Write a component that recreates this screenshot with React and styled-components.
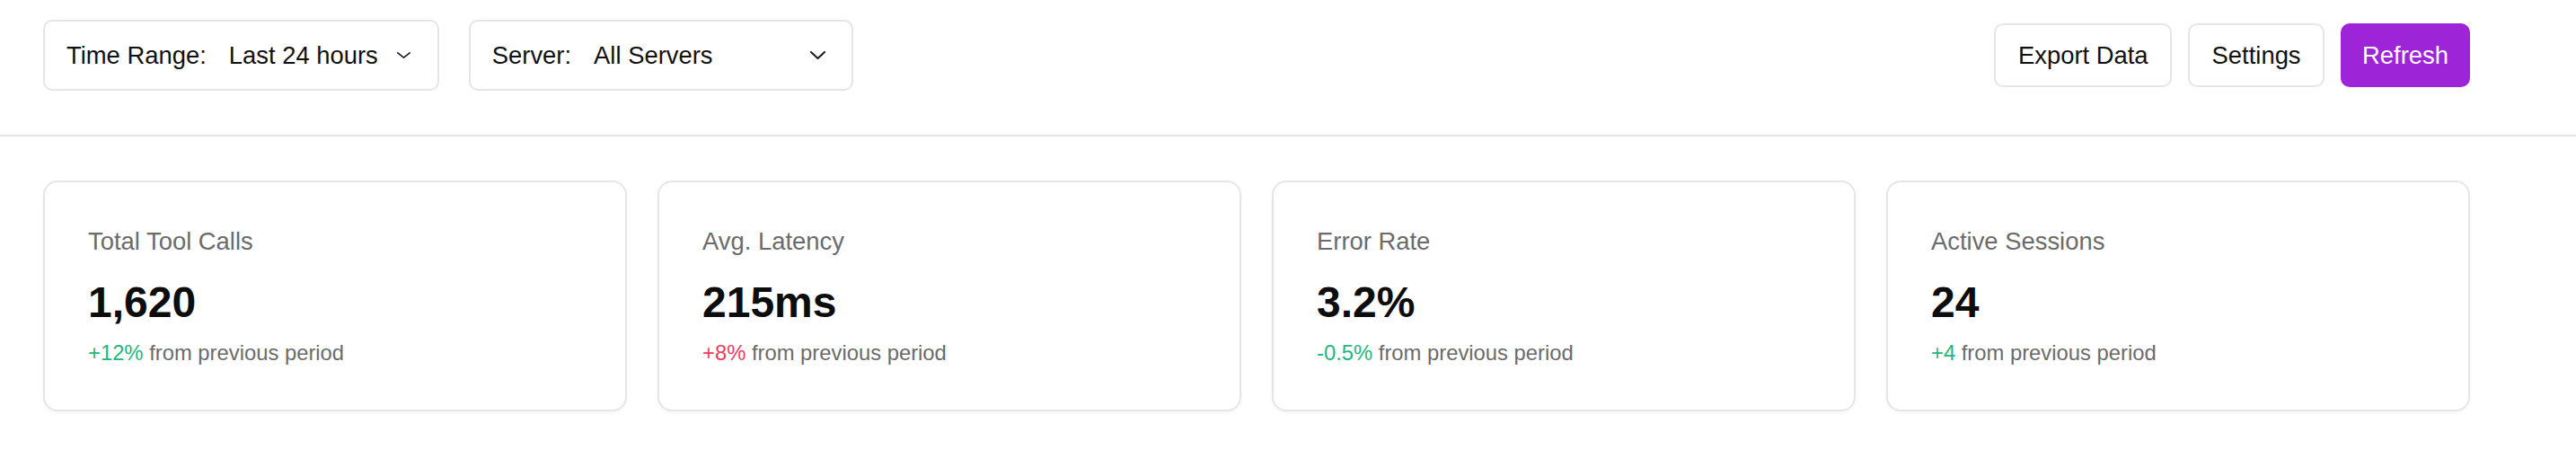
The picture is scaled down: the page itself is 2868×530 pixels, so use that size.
import React from "react";
import styled, { createGlobalStyle } from "styled-components";

const GlobalStyle = createGlobalStyle`
  html, body {
    margin: 0;
    padding: 0;
    background: #ffffff;
  }
  body {
    font-family: "Liberation Sans", Arial, Helvetica, sans-serif;
    color: #111111;
  }
  * { box-sizing: border-box; }
`;

const Page = styled.div`
  width: 100%;
  min-height: 530px;
  background: #ffffff;
`;

const Header = styled.header`
  display: flex;
  align-items: center;
  justify-content: space-between;
  padding: 22px 118px 49px 48px;
  border-bottom: 2px solid #e6e6e6;
`;

const Filters = styled.div`
  display: flex;
  align-items: center;
  gap: 33px;
`;

const FilterBox = styled.div`
  display: flex;
  align-items: center;
  gap: 25px;
  height: 79px;
  padding: 0 ${(p) => p.$padRight}px 0 24px;
  border: 2px solid #e6e6e6;
  border-radius: 10px;
  background: #ffffff;
`;

const FilterLabel = styled.span`
  font-size: 27.4px;
  line-height: 32px;
  color: #111111;
`;

const SelectBox = styled.div`
  display: flex;
  align-items: center;
  justify-content: space-between;
  gap: ${(p) => p.$gap}px;
  width: ${(p) => (p.$width ? `${p.$width}px` : "auto")};
  font-size: 27.4px;
  line-height: 32px;
  color: #111111;
  cursor: pointer;
`;

const Chevron = styled.svg`
  display: block;
  flex: none;
`;

const Actions = styled.div`
  display: flex;
  align-items: center;
  gap: 18px;
`;

const Button = styled.button`
  font-family: "Liberation Sans", Arial, Helvetica, sans-serif;
  font-size: 27.4px;
  line-height: 32px;
  padding: 17.5px ${(p) => (p.$primary ? 22 : 24.5)}px;
  border-radius: 10px;
  border: 2px solid ${(p) => (p.$primary ? "#9e24d8" : "#e6e6e6")};
  background: ${(p) => (p.$primary ? "#9e24d8" : "#ffffff")};
  color: ${(p) => (p.$primary ? "#ffffff" : "#111111")};
  cursor: pointer;
`;

const Cards = styled.section`
  display: grid;
  grid-template-columns: repeat(4, 1fr);
  gap: 34px;
  padding: 49px 118px 0 48px;
`;

const Card = styled.div`
  display: flex;
  flex-direction: column;
  padding: 50px 48px 49px;
  border: 2px solid #e6e6e6;
  border-radius: 16px;
  background: #ffffff;
  box-shadow: 0 2px 4px rgba(0, 0, 0, 0.04);
`;

const CardTitle = styled.div`
  font-size: 27.4px;
  line-height: 32px;
  color: #6b6b6b;
`;

const CardValue = styled.div`
  margin-top: 24px;
  font-size: 48px;
  line-height: 56px;
  font-weight: 700;
  color: #0d0d0d;
`;

const CardDelta = styled.div`
  margin-top: 14px;
  font-size: 23.8px;
  line-height: 28px;
  color: #6b6b6b;
`;

const Change = styled.span`
  color: ${(p) => (p.$bad ? "#f03c5c" : "#1fb67f")};
`;

const ChevronIcon = ({ w, h, sw }) => (
  <Chevron width={w} height={h} viewBox={`0 0 ${w} ${h}`} fill="none">
    <polyline
      points={`${sw / 2},${sw / 2} ${w / 2},${h - sw / 2} ${w - sw / 2},${sw / 2}`}
      stroke="#1a1a1a"
      strokeWidth={sw}
      strokeLinecap="round"
      strokeLinejoin="round"
    />
  </Chevron>
);

const stats = [
  { title: "Total Tool Calls", value: "1,620", change: "+12%", bad: false },
  { title: "Avg. Latency", value: "215ms", change: "+8%", bad: true },
  { title: "Error Rate", value: "3.2%", change: "-0.5%", bad: false },
  { title: "Active Sessions", value: "24", change: "+4", bad: false },
];

export default function App() {
  return (
    <Page>
      <GlobalStyle />
      <Header>
        <Filters>
          <FilterBox $padRight={30}>
            <FilterLabel>Time Range:</FilterLabel>
            <SelectBox $gap={21}>
              <span>Last 24 hours</span>
              <ChevronIcon w={15} h={7} sw={1.6} />
            </SelectBox>
          </FilterBox>
          <FilterBox $padRight={29}>
            <FilterLabel>Server:</FilterLabel>
            <SelectBox $width={258} $gap={17}>
              <span>All Servers</span>
              <ChevronIcon w={17} h={9} sw={2} />
            </SelectBox>
          </FilterBox>
        </Filters>
        <Actions>
          <Button>Export Data</Button>
          <Button>Settings</Button>
          <Button $primary>Refresh</Button>
        </Actions>
      </Header>
      <Cards>
        {stats.map((s) => (
          <Card key={s.title}>
            <CardTitle>{s.title}</CardTitle>
            <CardValue>{s.value}</CardValue>
            <CardDelta>
              <Change $bad={s.bad}>{s.change}</Change> from previous period
            </CardDelta>
          </Card>
        ))}
      </Cards>
    </Page>
  );
}
